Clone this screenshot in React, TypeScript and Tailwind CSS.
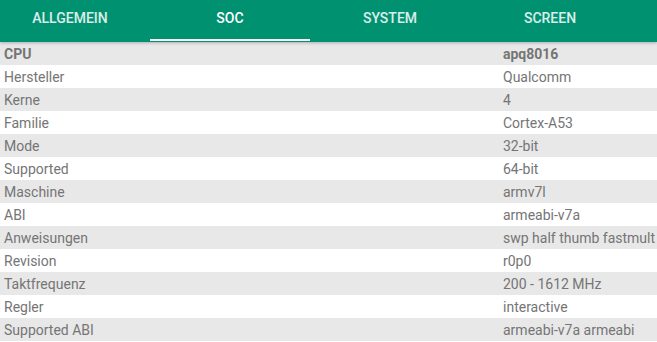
import React from "react"

const tabs = ["ALLGEMEIN", "SOC", "SYSTEM", "SCREEN"]

const rows: [string, string][] = [
  ["CPU", "apq8016"],
  ["Hersteller", "Qualcomm"],
  ["Kerne", "4"],
  ["Familie", "Cortex-A53"],
  ["Mode", "32-bit"],
  ["Supported", "64-bit"],
  ["Maschine", "armv7l"],
  ["ABI", "armeabi-v7a"],
  ["Anweisungen", "swp half thumb fastmult"],
  ["Revision", "r0p0"],
  ["Taktfrequenz", "200 - 1612 MHz"],
  ["Regler", "interactive"],
  ["Supported ABI", "armeabi-v7a armeabi"],
]

const App: React.FC = () => {
  return (
    <div className="w-[657px] h-[342px] overflow-hidden bg-white font-['Roboto',sans-serif]">
      <div className="relative z-10 h-[42px] bg-[#009171] shadow-[0_1px_3px_rgba(0,0,0,0.25)] overflow-hidden">
        <div className="flex -ml-[10px] h-full">
          {tabs.map((t, i) => (
            <div key={t} className="relative w-[160px] shrink-0 flex items-center justify-center pb-[6px]">
              <span className={"text-[14px] font-medium " + (i === 1 ? "text-white" : "text-white/85")}>{t}</span>
              {i === 1 && <div className="absolute left-0 right-0 bottom-[1px] h-[2px] bg-white" />}
            </div>
          ))}
        </div>
      </div>
      <div className="flex flex-col">
        {rows.map(([label, value], i) => (
          <div
            key={label}
            className={
              "flex h-[23px] pt-[2px] items-center text-[14px] text-[#757575] " +
              (i % 2 === 0 ? "bg-[#e8e8e8]" : "bg-white")
            }
          >
            <div className={"w-[503px] pl-[4px] " + (i === 0 ? "font-bold" : "")}>{label}</div>
            <div className={"whitespace-nowrap " + (i === 0 ? "font-bold" : "")}>{value}</div>
          </div>
        ))}
      </div>
    </div>
  )
}

export default App
